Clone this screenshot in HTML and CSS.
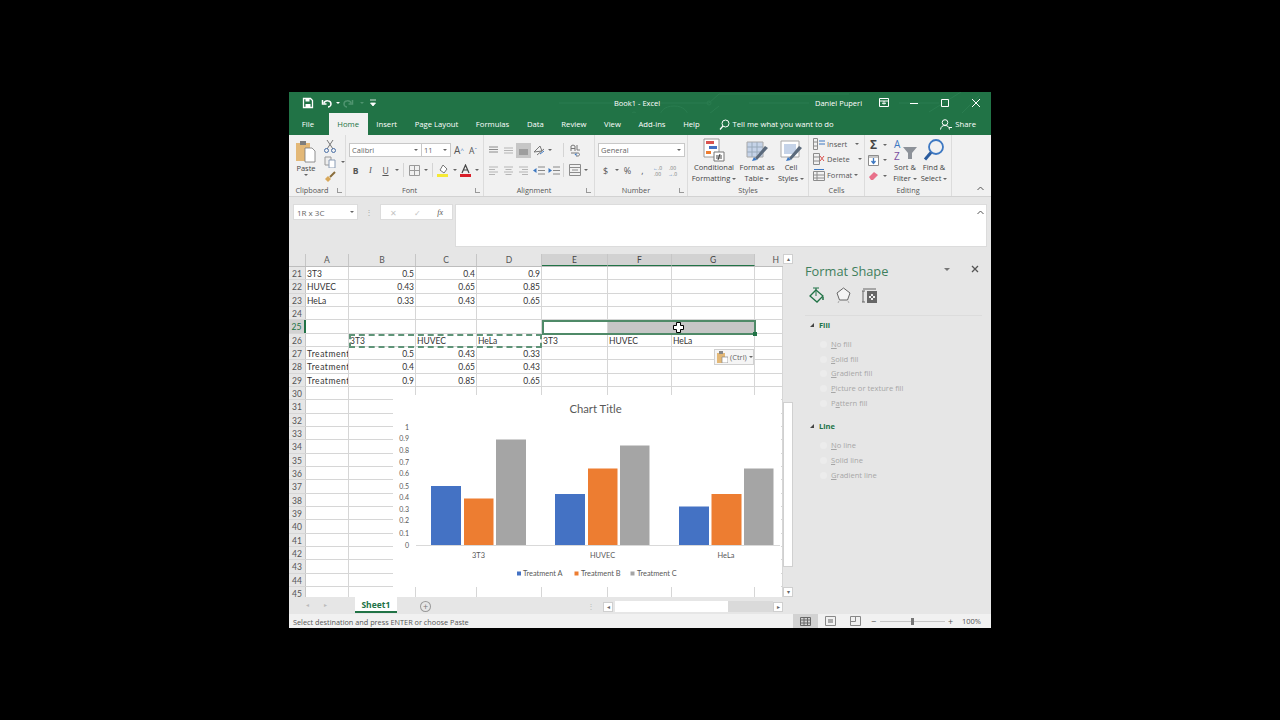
FILE: index.html
```html
<!DOCTYPE html>
<html lang="en">
<head>
    <meta charset="UTF-8">
    <title>Book1 - Excel</title>
    <link rel="stylesheet" href="styles.css">
</head>
<body>
<div class="window">

    <!-- Title bar -->
    <div class="titlebar">
        <svg class="circuit" width="702" height="43" viewBox="0 0 702 43" fill="none" stroke="#2a7d50" stroke-width="1">
            <path d="M270 11H420l10 -9H560M460 11H520M345 22H420l10 -8M385 34c-10 0 -14 -6 -14 -10s4 -10 14 -10 14 6 14 10-4 10-14 10zM640 20l32 -20M660 34l30 -30M610 11h40"/>
            <circle cx="420" cy="11" r="2"/><circle cx="345" cy="22" r="2"/>
        </svg>
        <div class="qat">
            <svg width="12" height="12" viewBox="0 0 12 12"><path d="M1.500 1.500h7l2 2v7h-9z" fill="none" stroke="#fff" stroke-width="1.300"/><path d="M3.500 2h4v2.500h-4zM3.500 7h5v3.500h-5z" fill="#fff"/></svg>
            <svg class="undo" width="12" height="12" viewBox="0 0 12 12"><path d="M3 6c1-3 7-3 7 1 0 2-2 3-3 3M1.500 3v4h4" fill="none" stroke="#fff" stroke-width="1.500"/></svg>
            <span class="qat-caret"></span>
            <svg class="redo" width="12" height="12" viewBox="0 0 12 12"><path d="M9 6c-1-3-7-3-7 1 0 2 2 3 3 3M10.500 3v4h-4" fill="none" stroke="#4f946f" stroke-width="1.500"/></svg>
            <span class="qat-caret dim"></span>
            <svg class="custom" width="6" height="8" viewBox="0 0 6 8"><path d="M0 1h6M.5 4h5l-2.500 3z" stroke="#fff" fill="#fff" stroke-width=".8"/></svg>
        </div>
        <div class="doc-title">Book1 - Excel</div>
        <div class="user">Daniel Puperi</div>
        <svg class="win-btn display" width="10" height="9" viewBox="0 0 10 9"><path d="M.5 .5h9v8h-9zM.5 3h9M5 3v3M3 5l2 1 2-1" fill="none" stroke="#fff"/></svg>
        <svg class="win-btn" width="8" height="8" viewBox="0 0 8 8"><path d="M0 4.500h8" stroke="#fff"/></svg>
        <svg class="win-btn" width="8" height="8" viewBox="0 0 8 8"><path d="M.5 .5h7v7h-7z" fill="none" stroke="#fff"/></svg>
        <svg class="win-btn" width="8" height="8" viewBox="0 0 8 8"><path d="M0 0l8 8M8 0l-8 8" stroke="#fff"/></svg>
    </div>

    <!-- Tabs -->
    <div class="tabs">
        <span class="tab">File</span>
        <span class="tab active">Home</span>
        <span class="tab">Insert</span>
        <span class="tab">Page Layout</span>
        <span class="tab">Formulas</span>
        <span class="tab">Data</span>
        <span class="tab">Review</span>
        <span class="tab">View</span>
        <span class="tab">Add-ins</span>
        <span class="tab">Help</span>
        <span class="tell">
            <svg width="11" height="11" viewBox="0 0 11 11"><circle cx="6.500" cy="4.500" r="3.500" fill="none" stroke="#fff"/><path d="M4 7l-3 3.500" stroke="#fff" stroke-width="1.200"/></svg>
            Tell me what you want to do
        </span>
        <span class="share">
            <svg width="12" height="11" viewBox="0 0 12 11"><circle cx="5" cy="3.500" r="2.800" fill="none" stroke="#fff"/><path d="M.5 10.500c.5-3 2-4 4.500-4s4 1 4.500 4M9 8.500h3" fill="none" stroke="#fff"/></svg>
            Share
        </span>
    </div>

    <!-- Ribbon -->
    <div class="ribbon">

        <div class="group g-clipboard">
            <div class="group-body clip-body">
                <div class="paste">
                    <svg width="22" height="23" viewBox="0 0 22 23"><path d="M1 3h14v18H1z" fill="#e3b877"/><path d="M5 1h6v4H5z" fill="#7d7d7d"/><path d="M10 8h7l3 3v11H10z" fill="#fff" stroke="#777" stroke-width=".8"/></svg>
                    <span class="big-label">Paste</span>
                    <span class="caret"></span>
                </div>
                <div class="clip-tools">
                    <svg width="12" height="13" viewBox="0 0 12 13"><path d="M3 0l6 9M9 0L3 9" stroke="#777" fill="none"/><circle cx="2.500" cy="10.500" r="2" fill="none" stroke="#4a6fa5"/><circle cx="9.500" cy="10.500" r="2" fill="none" stroke="#4a6fa5"/></svg>
                    <span class="tool-line">
                        <svg width="12" height="12" viewBox="0 0 12 12"><path d="M1 1h6v8H1z" fill="#eee" stroke="#999"/><path d="M5 4h6v8H5z" fill="#fff" stroke="#8a9cb5"/></svg>
                        <span class="caret"></span>
                    </span>
                    <svg width="12" height="12" viewBox="0 0 12 12"><path d="M6 6l5-5" stroke="#8a6d3b" stroke-width="2"/><path d="M1 8l3-3 3 3-3 3z" fill="#d8a85a"/></svg>
                </div>
            </div>
            <div class="group-label">Clipboard</div>
            <span class="launcher"></span>
        </div>

        <div class="group g-font">
            <div class="group-body">
                <div class="rib-row r1">
                    <div class="select font-name">Calibri<span class="caret"></span></div>
                    <div class="select font-size">11<span class="caret"></span></div>
                    <span class="btn glyph">A<sup>^</sup></span>
                    <span class="btn glyph small">A<sup>&#711;</sup></span>
                </div>
                <div class="rib-row r2 font-row">
                    <span class="btn bold">B</span>
                    <span class="btn italic">I</span>
                    <span class="btn under">U</span>
                    <span class="caret-box"><span class="caret"></span></span>
                    <span class="vsep"></span>
                    <span class="btn"><svg width="11" height="11" viewBox="0 0 11 11"><path d="M.5 .5h10v10H.5zM5.500 .5v10M.5 5.500h10" fill="none" stroke="#9a9a9a"/></svg></span>
                    <span class="caret-box"><span class="caret"></span></span>
                    <span class="vsep"></span>
                    <span class="btn"><svg width="13" height="13" viewBox="0 0 13 13"><path d="M6 1l4 4-3 4-4-3z" fill="#fff" stroke="#777"/><path d="M0 10h11v3H0z" fill="#f5e935"/></svg></span>
                    <span class="caret-box"><span class="caret"></span></span>
                    <span class="btn"><svg width="13" height="13" viewBox="0 0 13 13"><path d="M3 9l3.500-8 3.500 8M4.500 6h4" fill="none" stroke="#444" stroke-width="1.200"/><path d="M1 10h11v3H1z" fill="#d9202a"/></svg></span>
                    <span class="caret-box"><span class="caret"></span></span>
                </div>
            </div>
            <div class="group-label">Font</div>
            <span class="launcher"></span>
        </div>

        <div class="group g-align">
            <div class="group-body">
                <div class="rib-row r1">
                    <span class="btn"><svg width="11" height="9" viewBox="0 0 11 9"><path d="M1 1h9M1 3.500h9M1 6h9" stroke="#8c8c8c"/></svg></span>
                    <span class="btn"><svg width="11" height="9" viewBox="0 0 11 9"><path d="M1 2h9M1 4.500h9M1 7h9" stroke="#b5b5b5"/></svg></span>
                    <span class="btn on"><svg width="11" height="9" viewBox="0 0 11 9"><path d="M1 4h9M1 6h9M1 8h9" stroke="#777"/></svg></span>
                    <span class="btn"><svg width="12" height="12" viewBox="0 0 12 12"><path d="M1 8l6-6 2 5zM4 11l7-6" fill="none" stroke="#777"/><path d="M7 10l4-3" stroke="#3d78c2"/></svg></span>
                    <span class="caret-box"><span class="caret"></span></span>
                    <span class="vsep wide"></span>
                    <span class="btn"><svg width="12" height="13" viewBox="0 0 12 13"><path d="M2 7V2l2-1 2 1v5M2 4.500h4M8 1v5h3M2 9h7c2 0 2 3 0 3H7" fill="none" stroke="#777"/><path d="M5.500 10.500l2 1.500v-3z" fill="#3d78c2"/></svg></span>
                </div>
                <div class="rib-row r2">
                    <span class="btn"><svg width="11" height="9" viewBox="0 0 11 9"><path d="M1 1h9M1 3.500h6M1 6h9M1 8.500h6" stroke="#b5b5b5"/></svg></span>
                    <span class="btn"><svg width="11" height="9" viewBox="0 0 11 9"><path d="M1 1h9M2.500 3.500h6M1 6h9M2.500 8.500h6" stroke="#b5b5b5"/></svg></span>
                    <span class="btn"><svg width="11" height="9" viewBox="0 0 11 9"><path d="M1 1h9M4 3.500h6M1 6h9M4 8.500h6" stroke="#b5b5b5"/></svg></span>
                    <span class="btn"><svg width="12" height="9" viewBox="0 0 12 9"><path d="M5 1h7M5 4.500h7M5 8h7" stroke="#888"/><path d="M0 4.500l3.500-2.500v5z" fill="#3d78c2"/></svg></span>
                    <span class="btn"><svg width="12" height="9" viewBox="0 0 12 9"><path d="M5 1h7M5 4.500h7M5 8h7" stroke="#888"/><path d="M4 4.500L.5 2v5z" fill="#3d78c2"/></svg></span>
                    <span class="vsep narrow"></span>
                    <span class="btn"><svg width="12" height="12" viewBox="0 0 12 12"><path d="M.5 .5h11v11H.5zM.5 3.500h11M.5 8.500h11M3 6h6" fill="none" stroke="#8c8c8c"/></svg></span>
                    <span class="caret-box"><span class="caret"></span></span>
                </div>
            </div>
            <div class="group-label">Alignment</div>
            <span class="launcher"></span>
        </div>

        <div class="group g-number">
            <div class="group-body">
                <div class="rib-row r1">
                    <div class="select general">General<span class="caret"></span></div>
                </div>
                <div class="rib-row r2">
                    <span class="btn num">$</span>
                    <span class="caret-box"><span class="caret"></span></span>
                    <span class="btn num">%</span>
                    <span class="btn num">,</span>
                    <span class="btn deci"><b>&larr;</b>.0<br>.00</span>
                    <span class="btn deci">.00<br><b>&rarr;</b>.0</span>
                </div>
            </div>
            <div class="group-label">Number</div>
            <span class="launcher"></span>
        </div>

        <div class="group g-styles">
            <div class="group-body big-row">
                <div class="big cf">
                    <svg width="22" height="24" viewBox="0 0 22 24"><path d="M1 1h15v18H1z" fill="#fff" stroke="#999"/><path d="M3 3h8v3H3z" fill="#d9534f"/><path d="M6 8h8v3H6z" fill="#4472c4"/><path d="M3 13h5v3H3z" fill="#ed7d31"/><path d="M11 14h10v9H11z" fill="#fff" stroke="#777"/><path d="M13 18h6M13 20h6M17 16l-2 6" stroke="#444" fill="none"/></svg>
                    <span class="big-label">Conditional<br>Formatting<span class="caret inl"></span></span>
                </div>
                <div class="big ft">
                    <svg width="24" height="24" viewBox="0 0 24 24"><path d="M2 4h16v15H2z" fill="#c5d3e8" stroke="#a8a8a8"/><path d="M2 9h16M2 14h16M7 4v15M12 4v15" stroke="#9ab"/><path d="M10 20l10-12 3 2-11 12z" fill="#5b6a7c"/><path d="M9 19l3 3-5 1z" fill="#3d78c2"/></svg>
                    <span class="big-label">Format as<br>Table<span class="caret inl"></span></span>
                </div>
                <div class="big cs">
                    <svg width="24" height="24" viewBox="0 0 24 24"><path d="M2 3h18v16H2z" fill="#fff" stroke="#a8a8a8"/><path d="M5 6h12v10H5z" fill="#c5d3e8"/><path d="M10 20l10-12 3 2-11 12z" fill="#5b6a7c"/><path d="M9 19l3 3-5 1z" fill="#3d78c2"/></svg>
                    <span class="big-label">Cell<br>Styles<span class="caret inl"></span></span>
                </div>
            </div>
            <div class="group-label">Styles</div>
        </div>

        <div class="group g-cells">
            <div class="group-body cell-list">
                <div class="cell-tool">
                    <svg width="12" height="12" viewBox="0 0 12 12"><path d="M.5 .5h4v11h-4zM.5 4h4M.5 8h4" fill="none" stroke="#8c8c8c"/><path d="M6 6h6M6 3h6" stroke="#3d78c2"/></svg>
                    Insert<span class="caret spaced"></span>
                </div>
                <div class="cell-tool">
                    <svg width="12" height="12" viewBox="0 0 12 12"><path d="M.5 .5h6v11h-6zM.5 4h6M.5 8h6" fill="none" stroke="#8c8c8c"/><path d="M7 3l4 5M11 3L7 8" stroke="#d9534f"/></svg>
                    Delete<span class="caret spaced"></span>
                </div>
                <div class="cell-tool">
                    <svg width="12" height="12" viewBox="0 0 12 12"><path d="M.5 2.500h11v9H.5zM.5 6h11M.5 9h11M4 2.500v9" fill="none" stroke="#8c8c8c"/><path d="M1 .5h10" stroke="#3d78c2"/></svg>
                    Format<span class="caret"></span>
                </div>
            </div>
            <div class="group-label">Cells</div>
        </div>

        <div class="group g-editing">
            <div class="group-body edit-body">
                <div class="edit-tools">
                    <div class="edit-tool"><span class="sigma">&Sigma;</span><span class="caret"></span></div>
                    <div class="edit-tool"><svg width="11" height="11" viewBox="0 0 11 11"><path d="M.5 .5h10v10H.5z" fill="#fff" stroke="#8c8c8c"/><path d="M.5 2h10" stroke="#8c8c8c"/><path d="M5.500 3v5M3.500 6l2 2.500 2-2.500" fill="none" stroke="#3d78c2" stroke-width="1.300"/></svg><span class="caret"></span></div>
                    <div class="edit-tool"><svg width="11" height="10" viewBox="0 0 11 10"><path d="M1 6l5-5 4 3-5 5H3z" fill="#e8708a"/></svg><span class="caret"></span></div>
                </div>
                <div class="big sort">
                    <svg width="24" height="24" viewBox="0 0 24 24"><text x="1" y="9.500" class="az a">A</text><text x="1" y="22" class="az z">Z</text><path d="M10 9h14l-5 6v6h-4v-6z" fill="#8d9299"/></svg>
                    <span class="big-label">Sort &amp;<br>Filter<span class="caret inl"></span></span>
                </div>
                <div class="big find">
                    <svg width="22" height="23" viewBox="0 0 22 23"><circle cx="13" cy="8.500" r="7" fill="none" stroke="#3d78c2" stroke-width="1.800"/><path d="M8 14l-6 7" stroke="#2b5c9e" stroke-width="3"/></svg>
                    <span class="big-label">Find &amp;<br>Select<span class="caret inl"></span></span>
                </div>
            </div>
            <div class="group-label">Editing</div>
        </div>

        <div class="ribbon-end">
            <svg width="7" height="5" viewBox="0 0 7 5"><path d="M.5 4L3.500 1l3 3" fill="none" stroke="#555"/></svg>
        </div>
    </div>

    <!-- Formula bar -->
    <div class="formula-bar">
        <div class="name-box">1R x 3C<span class="caret"></span></div>
        <div class="fb-dots">&#8942;</div>
        <div class="fx-box"><span>&#10005;</span><span>&#10003;</span><em>fx</em></div>
        <div class="formula-input">
            <svg width="7" height="5" viewBox="0 0 7 5"><path d="M.5 4L3.500 1l3 3" fill="none" stroke="#555"/></svg>
        </div>
    </div>

    <div class="workspace">
        <div class="sheet-side">
            <div class="sheet">
                <div class="row head">
                    <span class="corner"></span><span>A</span><span>B</span><span>C</span><span>D</span><span class="sel">E</span><span class="sel">F</span><span class="sel">G</span><span class="col-h">H</span>
                </div>
                <div class="row"><span>21</span><span>3T3</span><span class="n">0.5</span><span class="n">0.4</span><span class="n">0.9</span><span></span><span></span><span></span><span></span></div>
                <div class="row"><span>22</span><span>HUVEC</span><span class="n">0.43</span><span class="n">0.65</span><span class="n">0.85</span><span></span><span></span><span></span><span></span></div>
                <div class="row"><span>23</span><span>HeLa</span><span class="n">0.33</span><span class="n">0.43</span><span class="n">0.65</span><span></span><span></span><span></span><span></span></div>
                <div class="row"><span>24</span><span></span><span></span><span></span><span></span><span></span><span></span><span></span><span></span></div>
                <div class="row cur"><span>25</span><span></span><span></span><span></span><span></span><span></span><span></span><span></span><span></span></div>
                <div class="row"><span>26</span><span></span><span>3T3</span><span>HUVEC</span><span>HeLa</span><span>3T3</span><span>HUVEC</span><span>HeLa</span><span></span></div>
                <div class="row"><span>27</span><span class="t">Treatment A</span><span class="n">0.5</span><span class="n">0.43</span><span class="n">0.33</span><span></span><span></span><span></span><span></span></div>
                <div class="row"><span>28</span><span class="t">Treatment B</span><span class="n">0.4</span><span class="n">0.65</span><span class="n">0.43</span><span></span><span></span><span></span><span></span></div>
                <div class="row"><span>29</span><span class="t">Treatment C</span><span class="n">0.9</span><span class="n">0.85</span><span class="n">0.65</span><span></span><span></span><span></span><span></span></div>
                <div class="row"><span>30</span><span></span><span></span><span></span><span></span><span></span><span></span><span></span><span></span></div>
                <div class="row"><span>31</span><span></span><span></span><span></span><span></span><span></span><span></span><span></span><span></span></div>
                <div class="row"><span>32</span><span></span><span></span><span></span><span></span><span></span><span></span><span></span><span></span></div>
                <div class="row"><span>33</span><span></span><span></span><span></span><span></span><span></span><span></span><span></span><span></span></div>
                <div class="row"><span>34</span><span></span><span></span><span></span><span></span><span></span><span></span><span></span><span></span></div>
                <div class="row"><span>35</span><span></span><span></span><span></span><span></span><span></span><span></span><span></span><span></span></div>
                <div class="row"><span>36</span><span></span><span></span><span></span><span></span><span></span><span></span><span></span><span></span></div>
                <div class="row"><span>37</span><span></span><span></span><span></span><span></span><span></span><span></span><span></span><span></span></div>
                <div class="row"><span>38</span><span></span><span></span><span></span><span></span><span></span><span></span><span></span><span></span></div>
                <div class="row"><span>39</span><span></span><span></span><span></span><span></span><span></span><span></span><span></span><span></span></div>
                <div class="row"><span>40</span><span></span><span></span><span></span><span></span><span></span><span></span><span></span><span></span></div>
                <div class="row"><span>41</span><span></span><span></span><span></span><span></span><span></span><span></span><span></span><span></span></div>
                <div class="row"><span>42</span><span></span><span></span><span></span><span></span><span></span><span></span><span></span><span></span></div>
                <div class="row"><span>43</span><span></span><span></span><span></span><span></span><span></span><span></span><span></span><span></span></div>
                <div class="row"><span>44</span><span></span><span></span><span></span><span></span><span></span><span></span><span></span><span></span></div>
                <div class="row"><span>45</span><span></span><span></span><span></span><span></span><span></span><span></span><span></span><span></span></div>

                <!-- things floating over the cells -->
                <div class="selection"><div class="selection-fill"></div><span class="handle"></span></div>
                <div class="marching"></div>
                <svg class="cursor" width="11" height="11" viewBox="0 0 11 11"><path d="M3.500 .5h4v3h3v4h-3v3h-4v-3h-3v-4h3z" fill="#fff" stroke="#000"/></svg>
                <div class="paste-opt">
                    <svg width="11" height="12" viewBox="0 0 11 12"><path d="M0 2h8v10H0z" fill="#e3b877"/><path d="M2 0h4v3H2z" fill="#888"/><path d="M5 6h6v6H5z" fill="#fff" stroke="#888" stroke-width=".7"/></svg>
                    (Ctrl)<span class="caret"></span>
                </div>
                <svg class="chart" width="388" height="192" viewBox="393 395 388 192">
                    <text x="595.500" y="413" class="c-title">Chart Title</text>
                    <g class="c-y">
                        <text x="409" y="429.500">1</text><text x="409" y="441">0.9</text><text x="409" y="453">0.8</text><text x="409" y="464.500">0.7</text><text x="409" y="476">0.6</text><text x="409" y="488.500">0.5</text><text x="409" y="500">0.4</text><text x="409" y="511.500">0.3</text><text x="409" y="523">0.2</text><text x="409" y="535.500">0.1</text><text x="409" y="547.500">0</text>
                    </g>
                    <path d="M416 545.500H780" stroke="#d9d9d9"/>
                    <g fill="#4472c4"><rect x="431" y="486" width="30" height="59"/><rect x="555" y="494" width="30" height="51"/><rect x="679" y="506.500" width="30" height="38.500"/></g>
                    <g fill="#ed7d31"><rect x="464" y="498.500" width="29.500" height="46.500"/><rect x="588" y="468.500" width="29.500" height="76.500"/><rect x="711.500" y="494" width="30" height="51"/></g>
                    <g fill="#a5a5a5"><rect x="496" y="439.500" width="30" height="105.500"/><rect x="620" y="445.500" width="29.500" height="99.500"/><rect x="744" y="468.500" width="29.500" height="76.500"/></g>
                    <g class="c-x"><text x="478.500" y="558">3T3</text><text x="602.500" y="558">HUVEC</text><text x="726" y="558">HeLa</text></g>
                    <rect x="517" y="571.500" width="4" height="4" fill="#4472c4"/><text x="523" y="576" class="c-leg">Treatment A</text>
                    <rect x="574.500" y="571.500" width="4" height="4" fill="#ed7d31"/><text x="581" y="576" class="c-leg">Treatment B</text>
                    <rect x="630.500" y="571.500" width="4" height="4" fill="#a5a5a5"/><text x="637" y="576" class="c-leg">Treatment C</text>
                </svg>
            </div>
            <div class="sheet-bar">
                <span class="nav-arrow">&#9666;</span><span class="nav-arrow">&#9656;</span>
                <span class="sheet-tab">Sheet1</span>
                <span class="add-sheet">+</span>
                <span class="bar-dots">&#8942;</span>
                <div class="hscroll">
                    <span class="sb-btn">&#9666;</span>
                    <span class="h-thumb"></span>
                    <span class="h-track"></span>
                    <span class="sb-btn">&#9656;</span>
                </div>
            </div>
        </div>

        <div class="vscroll">
            <span class="sb-btn">&#9652;</span>
            <span class="v-gap"></span>
            <span class="v-thumb"></span>
            <span class="v-end"></span>
            <span class="sb-btn">&#9662;</span>
        </div>

        <!-- Format Shape pane -->
        <div class="pane">
            <div class="pane-head">
                <span class="pane-title">Format Shape</span>
                <span class="pane-menu"></span>
                <svg width="8" height="8" viewBox="0 0 8 8"><path d="M1 1l6 6M7 1l-6 6" stroke="#555" stroke-width="1.300"/></svg>
            </div>
            <div class="pane-icons">
                <svg width="17" height="17" viewBox="0 0 17 17"><path d="M8 3l7 6-6 6-7-6z" fill="none" stroke="#217346" stroke-width="1.300"/><path d="M8 9V1M5 1h6" stroke="#217346" fill="none"/><path d="M15 10v3" stroke="#217346" stroke-width="1.500"/></svg>
                <svg width="15" height="16" viewBox="0 0 15 16"><path d="M7.500 1l6.500 5-2.500 7h-8L1 6z" fill="#f4f4f4" stroke="#666"/><path d="M3 14l-1 2M12 14l1 2" stroke="#aaa"/></svg>
                <svg width="15" height="15" viewBox="0 0 15 15"><path d="M1 1h13M1 3v11M0 3h3M0 14h3" stroke="#666" fill="none"/><path d="M5 3h10v12H5z" fill="#666"/><path d="M9 6h2v2H9zM7 8h2v2H7zM11 8h2v2h-2zM9 10h2v2H9z" fill="#eee"/></svg>
            </div>
            <div class="pane-rule"></div>
            <div class="pane-section"><span class="tri"></span>Fill</div>
            <ul class="radio-list">
                <li><u>N</u>o fill</li>
                <li><u>S</u>olid fill</li>
                <li><u>G</u>radient fill</li>
                <li><u>P</u>icture or texture fill</li>
                <li>P<u>a</u>ttern fill</li>
            </ul>
            <div class="pane-section line-head"><span class="tri"></span>Line</div>
            <ul class="radio-list">
                <li><u>N</u>o line</li>
                <li><u>S</u>olid line</li>
                <li><u>G</u>radient line</li>
            </ul>
        </div>
    </div>

    <!-- Status bar -->
    <div class="statusbar">
        <span class="status-text">Select destination and press ENTER or choose Paste</span>
        <span class="view-btn on"><svg width="11" height="9" viewBox="0 0 11 9"><path d="M.5 .5h10v8H.5zM.5 3h10M.5 6h10M4 .5v8M7.500 .5v8" fill="none" stroke="#666"/></svg></span>
        <span class="view-btn"><svg width="11" height="10" viewBox="0 0 11 10"><path d="M.5 .5h10v9H.5z" fill="none" stroke="#888"/><path d="M3 3h5v4H3z" fill="#aaa"/></svg></span>
        <span class="view-btn"><svg width="11" height="10" viewBox="0 0 11 10"><path d="M.5 .5h10v9H.5zM5.500 .5v5M.5 5.500h5" fill="none" stroke="#888"/></svg></span>
        <span class="zoom-minus">&minus;</span>
        <span class="zoom-track"><span class="zoom-thumb"></span></span>
        <span class="zoom-plus">+</span>
        <span class="zoom-val">100%</span>
    </div>
</div>
</body>
</html>
```

FILE: styles.css
```css
/* Page */
body {
    margin: 0;
    background-color: #000;
    font-family: "Open Sans", sans-serif;
    font-size: 7.5px;
    color: #444;
    overflow: hidden;
}
.window {
    width: 702px;
    height: 536px;
    margin: 92px 0 0 289px;
    background-color: #e6e6e6;
    display: flex;
    flex-direction: column;
}
svg {
    display: block;
    flex: none;
}
.caret {
    display: inline-block;
    width: 0;
    height: 0;
    border: 2px solid transparent;
    border-top: 2.5px solid #666;
    border-bottom: 0;
}

/* Title bar */
.titlebar {
    height: 21px;
    background-color: #217346;
    color: #fff;
    display: flex;
    align-items: center;
    position: relative;
}
.circuit {
    position: absolute;
    left: 0;
    top: 0;
}
.qat {
    display: flex;
    align-items: center;
    flex: none;
    width: 325px;
    padding-left: 13px;
    box-sizing: border-box;
    position: relative;
}
.undo { margin-left: 7px; }
.redo { margin-left: 2px; }
.custom { margin-left: 6px; }
.qat-caret {
    width: 0;
    height: 0;
    margin-left: 3px;
    border: 2px solid transparent;
    border-top: 2.5px solid #fff;
    border-bottom: 0;
}
.qat-caret.dim { border-top-color: #4f946f; margin-left: 6px; }
.doc-title {
    flex: none;
    width: 201px;
    position: relative;
}
.user {
    flex: none;
    width: 64px;
    position: relative;
}
.win-btn { position: relative; margin-right: 23px; }
.win-btn.display { margin-right: 21px; }
.win-btn:last-child { margin-right: 0; }

/* Tabs */
.tabs {
    height: 22px;
    background-color: #217346;
    color: #fff;
    display: flex;
    align-items: stretch;
    padding-left: 4px;
    font-size: 7.700px;
    position: relative;
}
.tab {
    padding: 0 8.800px;
    display: flex;
    align-items: center;
}
.tab.active {
    background-color: #f1f1f1;
    color: #217346;
    margin-left: 6px;
    padding: 0 8.500px;
}
.tell {
    display: flex;
    align-items: center;
    gap: 3px;
    margin-left: 10px;
}
.share {
    display: flex;
    align-items: center;
    gap: 3px;
    margin-left: auto;
    padding-right: 15px;
}

/* Ribbon */
.ribbon {
    height: 62px;
    background-color: #f1f1f1;
    border-bottom: 1px solid #d2d2d2;
    box-sizing: border-box;
    display: flex;
}
.group {
    position: relative;
    display: flex;
    flex-direction: column;
    height: 61px;
    box-sizing: border-box;
    border-right: 1px solid #dcdcdc;
}
.g-clipboard { width: 57px; }
.g-font { width: 138px; }
.g-align { width: 111px; }
.g-number { width: 93px; }
.g-styles { width: 121px; }
.g-cells { width: 56px; }
.g-editing { width: 87px; }
.group-body {
    height: 49px;
    box-sizing: border-box;
    flex: none;
}
.group-label {
    text-align: center;
    font-size: 7.300px;
    line-height: 12px;
    color: #555;
}
.g-clipboard .group-label,
.g-font .group-label,
.g-align .group-label,
.g-number .group-label {
    padding-right: 10px;
}
.launcher {
    position: absolute;
    right: 3px;
    bottom: 3px;
    width: 4px;
    height: 4px;
    border-left: 1px solid #999;
    border-bottom: 1px solid #999;
}
.ribbon-end {
    flex: 1;
    display: flex;
    justify-content: flex-end;
    align-items: flex-end;
    padding: 0 7px 5px 0;
}
.rib-row {
    display: flex;
    align-items: center;
    height: 14px;
}
.r1 { margin-top: 8px; }
.r2 { margin-top: 6px; }
.g-font .rib-row { padding-left: 2px; }
.g-font .r1 { padding-left: 3px; }
.g-align .rib-row { padding-left: 2px; }
.g-number .rib-row { padding-left: 3px; }
.btn {
    width: 15px;
    height: 15px;
    flex: none;
    display: flex;
    align-items: center;
    justify-content: center;
    font-size: 8.500px;
    color: #555;
}
.btn.on { background-color: #c6c6c6; }
.bold { font-weight: bold; }
.italic { font-style: italic; font-family: "Liberation Serif", serif; }
.under { text-decoration: underline; }
.glyph { width: 14px; font-size: 10px; }
.glyph.small { font-size: 8.500px; }
.glyph sup { font-size: 6px; color: #3d78c2; line-height: 0; }
.num { font-size: 9px; }
.deci {
    display: block;
    font-size: 5px;
    line-height: 6px;
    padding-top: 2px;
    box-sizing: border-box;
    text-align: center;
    color: #777;
}
.deci b { color: #3d78c2; }
.caret-box {
    width: 7px;
    flex: none;
    display: flex;
    justify-content: center;
}
.vsep {
    width: 1px;
    height: 14px;
    margin: 0 3px 0 3px;
    background-color: #d4d4d4;
}
.vsep.wide { margin: 0 3px 0 10px; }
.vsep.narrow { margin: 0 3px 0 2px; }
.select {
    height: 14px;
    box-sizing: border-box;
    border: 1px solid #c8c8c8;
    background-color: #fff;
    display: flex;
    align-items: center;
    justify-content: space-between;
    padding: 0 3px 0 2px;
    color: #666;
    flex: none;
}
.font-name { width: 73px; }
.font-size { width: 30px; margin-left: -1px; margin-right: 1px; }
.general { width: 87px; }

/* Clipboard group */
.clip-body {
    display: flex;
    padding: 5px 0 0 6px;
}
.paste {
    width: 22px;
    display: flex;
    flex-direction: column;
    align-items: center;
}
.big-label {
    line-height: 11px;
    text-align: center;
    color: #444;
    font-size: 7.500px;
    white-space: nowrap;
}
.caret.inl { margin-left: 2px; vertical-align: middle; }
.clip-tools {
    display: flex;
    flex-direction: column;
    gap: 3px;
    margin-left: 7px;
}
.tool-line {
    display: flex;
    align-items: center;
    gap: 5px;
}

/* Big buttons */
.big-row {
    display: flex;
    padding: 3px 0 0 2px;
}
.big {
    display: flex;
    flex-direction: column;
    align-items: center;
}
.cf { width: 48px; }
.ft { width: 38px; }
.cs { width: 30px; }
.big svg { height: 24px; }
.az { font-size: 10px; font-family: "Open Sans", sans-serif; }
.az.a { fill: #3d78c2; }
.az.z { fill: #7a4fa0; }

/* Cells group */
.cell-list { padding: 1px 0 0 4px; }
.cell-tool {
    height: 15.500px;
    display: flex;
    align-items: center;
    gap: 2px;
    color: #555;
}
.caret.spaced { margin-left: 6px; }

/* Editing group */
.edit-body {
    display: flex;
    padding-top: 2px;
}
.edit-tools {
    width: 24px;
    padding-left: 3px;
    box-sizing: border-box;
}
.edit-tool {
    height: 15.500px;
    display: flex;
    align-items: center;
    gap: 4px;
}
.sigma {
    width: 11px;
    font-size: 12px;
    font-weight: bold;
    color: #444;
    text-align: center;
    line-height: 12px;
}
.sort { width: 30px; margin-left: 1px; padding-top: 1px; }
.find { width: 28px; padding-top: 1px; }

/* Formula bar */
.formula-bar {
    height: 57px;
    box-sizing: border-box;
    padding: 7px 4px 0 4px;
    display: flex;
    align-items: flex-start;
    flex: none;
}
.name-box {
    width: 65px;
    height: 16px;
    box-sizing: border-box;
    background-color: #fff;
    border: 1px solid #dcdcdc;
    display: flex;
    align-items: center;
    justify-content: space-between;
    padding: 0 3px 0 3px;
    color: #666;
    font-size: 8px;
    flex: none;
}
.fb-dots {
    width: 22px;
    text-align: center;
    line-height: 16px;
    color: #aaa;
    font-size: 8px;
    flex: none;
}
.fx-box {
    width: 73px;
    height: 16px;
    box-sizing: border-box;
    background-color: #fff;
    border: 1px solid #dcdcdc;
    display: flex;
    align-items: center;
    justify-content: space-between;
    padding: 0 9px;
    color: #c4c4c4;
    font-size: 8px;
    flex: none;
}
.fx-box em {
    color: #555;
    font-family: "Liberation Serif", serif;
}
.formula-input {
    flex: 1;
    height: 43px;
    margin-left: 2px;
    background-color: #fff;
    border: 1px solid #dcdcdc;
    box-sizing: border-box;
    display: flex;
    justify-content: flex-end;
    padding: 5px 2px 0 0;
}

/* Sheet */
.workspace {
    flex: 1;
    display: flex;
    min-height: 0;
}
.sheet-side {
    width: 494px;
    display: flex;
    flex-direction: column;
}
.sheet {
    height: 343px;
    position: relative;
    overflow: hidden;
    background-color: #fff;
    font-family: Lato, sans-serif;
    font-size: 8.500px;
    color: #333;
}
.row {
    display: grid;
    grid-template-columns: 17px 43px 67px 61px 65px 66px 64px 83px 28px;
    height: 13.330px;
    box-sizing: border-box;
    border-bottom: 1px solid #d6d6d6;
}
.row span {
    border-right: 1px solid #d6d6d6;
    padding: 2px 1px 0 1px;
    line-height: 10.500px;
    white-space: nowrap;
    overflow: hidden;
}
.row span:first-child {
    background-color: #e6e6e6;
    text-align: center;
    padding: 2px 0 0 0;
    color: #555;
    border-right-color: #c6c6c6;
}
.row .n { text-align: right; }
.row .t { letter-spacing: .55px; }
.row.cur span:first-child {
    background-color: #d2d2d2;
    color: #217346;
    border-right: 2px solid #217346;
}
.row.head {
    height: 13px;
    border-bottom-color: #bdbdbd;
}
.row.head span {
    background-color: #e6e6e6;
    text-align: center;
    color: #555;
    border-right-color: #c6c6c6;
    padding-top: 1px;
}
.row.head .sel {
    background-color: #d2d2d2;
    border-bottom: 1px solid #217346;
    color: #444;
}
.row.head .col-h {
    text-align: right;
    padding-right: 4px;
    border-right: 0;
}
.row .corner { position: relative; }

/* Selection overlays */
.selection {
    position: absolute;
    left: 253px;
    top: 66px;
    width: 214px;
    height: 14.500px;
    box-sizing: border-box;
    border: 2px solid #4f8a68;
}
.selection-fill {
    position: absolute;
    left: 64px;
    top: 0;
    right: 0;
    bottom: 0;
    background-color: #c6c6c6;
}
.handle {
    position: absolute;
    right: -3px;
    bottom: -3px;
    width: 4px;
    height: 4px;
    background-color: #217346;
}
.marching {
    position: absolute;
    left: 60px;
    top: 80px;
    width: 193px;
    height: 13.500px;
    box-sizing: border-box;
    border: 2px dashed #5f9478;
}
.cursor {
    position: absolute;
    left: 384px;
    top: 68px;
}
.paste-opt {
    position: absolute;
    left: 425px;
    top: 95px;
    width: 40px;
    height: 16px;
    box-sizing: border-box;
    background-color: #f5f5f5;
    border: 1px solid #d0d0d0;
    display: flex;
    align-items: center;
    gap: 2px;
    padding-left: 2px;
    font-family: "Open Sans", sans-serif;
    font-size: 7.500px;
    color: #666;
}

/* Chart */
.chart {
    position: absolute;
    left: 104px;
    top: 141px;
    background-color: #fff;
    font-family: Lato, sans-serif;
}
.c-title {
    font-size: 11.300px;
    fill: #595959;
    text-anchor: middle;
}
.c-y text {
    font-size: 7px;
    fill: #595959;
    text-anchor: end;
}
.c-x text {
    font-size: 7.400px;
    fill: #595959;
    text-anchor: middle;
}
.c-leg {
    font-size: 7.400px;
    fill: #595959;
}

/* Sheet tabs and scroll bars */
.sheet-bar {
    height: 17px;
    display: flex;
    align-items: flex-start;
    color: #bbb;
}
.nav-arrow {
    width: 18px;
    text-align: center;
    line-height: 17px;
    font-size: 6px;
}
.nav-arrow:first-child { margin-left: 10px; }
.sheet-tab {
    width: 43px;
    height: 16px;
    margin-left: 20px;
    background-color: #fff;
    border-bottom: 2px solid #217346;
    box-sizing: border-box;
    text-align: center;
    color: #217346;
    font-weight: bold;
    font-size: 8.500px;
    line-height: 15px;
}
.add-sheet {
    width: 9px;
    height: 9px;
    margin: 4px 0 0 23px;
    border: 1px solid #9a9a9a;
    border-radius: 50%;
    text-align: center;
    color: #777;
    font-size: 9px;
    line-height: 9px;
}
.bar-dots {
    margin-left: 156px;
    line-height: 17px;
    font-size: 8px;
}
.hscroll {
    display: flex;
    align-items: center;
    height: 11px;
    margin: 4px 0 0 8px;
}
.sb-btn {
    width: 10px;
    height: 10px;
    box-sizing: border-box;
    background-color: #fff;
    border: 1px solid #cfcfcf;
    color: #666;
    font-size: 6px;
    line-height: 8px;
    text-align: center;
    flex: none;
    overflow: hidden;
}
.h-thumb {
    width: 113px;
    height: 11px;
    background-color: #fff;
    margin-left: 2px;
}
.h-track {
    width: 45px;
    height: 11px;
    background-color: #dadada;
}
.vscroll {
    width: 10px;
    margin-right: 2px;
    display: flex;
    flex-direction: column;
    height: 343px;
}
.v-gap {
    height: 138px;
    background-color: #e6e6e6;
}
.v-thumb {
    height: 165px;
    background-color: #fff;
    border: 1px solid #d0d0d0;
    box-sizing: border-box;
}
.v-end {
    height: 20px;
}

/* Format Shape pane */
.pane {
    flex: 1;
    padding: 0 9px 0 10px;
    box-sizing: border-box;
    color: #a6a6a6;
    font-size: 7.600px;
}
.pane-head {
    display: flex;
    align-items: center;
    height: 30px;
    padding-right: 3px;
}
.pane-title {
    font-size: 12.800px;
    color: #3f7f5d;
    flex: 1;
    padding-top: 3px;
}
.pane-menu {
    width: 0;
    height: 0;
    border: 3px solid transparent;
    border-top: 3px solid #777;
    border-bottom: 0;
    margin-right: 21px;
}
.pane-icons {
    display: flex;
    align-items: center;
    gap: 11px;
    height: 22px;
    padding-left: 3px;
}
.pane-rule {
    height: 1px;
    background-color: #dcdcdc;
    margin-top: 9px;
}
.pane-section {
    display: flex;
    align-items: center;
    gap: 5px;
    height: 18px;
    font-weight: bold;
    color: #217346;
    font-size: 7.500px;
    padding-left: 5px;
}
.tri {
    width: 0;
    height: 0;
    border-style: solid;
    border-width: 0 0 4px 4px;
    border-color: transparent transparent #444 transparent;
}
.line-head { margin-top: 7px; }
.radio-list {
    list-style: none;
    margin: 3px 0 0 0;
    padding: 0;
}
.radio-list li {
    height: 14.700px;
    line-height: 14.700px;
    padding-left: 26px;
    position: relative;
}
.radio-list li::before {
    content: "";
    position: absolute;
    left: 15px;
    top: 4px;
    width: 7px;
    height: 7px;
    border-radius: 50%;
    background-color: #ececec;
}

/* Status bar */
.statusbar {
    height: 14px;
    background-color: #f1f1f1;
    display: flex;
    align-items: center;
    color: #555;
    flex: none;
}
.status-text {
    width: 504px;
    padding: 1px 0 0 4px;
    box-sizing: border-box;
    font-size: 7.300px;
}
.view-btn {
    width: 25px;
    height: 14px;
    display: flex;
    align-items: center;
    justify-content: center;
}
.view-btn.on { background-color: #d2d2d2; }
.zoom-minus { margin-left: 3px; width: 9px; font-size: 9px; }
.zoom-track {
    width: 65px;
    height: 1px;
    background-color: #c6c6c6;
    position: relative;
}
.zoom-thumb {
    position: absolute;
    left: 31px;
    top: -3px;
    width: 3px;
    height: 7px;
    background-color: #777;
}
.zoom-plus { margin-left: 3px; width: 14px; font-size: 9px; }
.zoom-val { font-size: 7.500px; }
```
